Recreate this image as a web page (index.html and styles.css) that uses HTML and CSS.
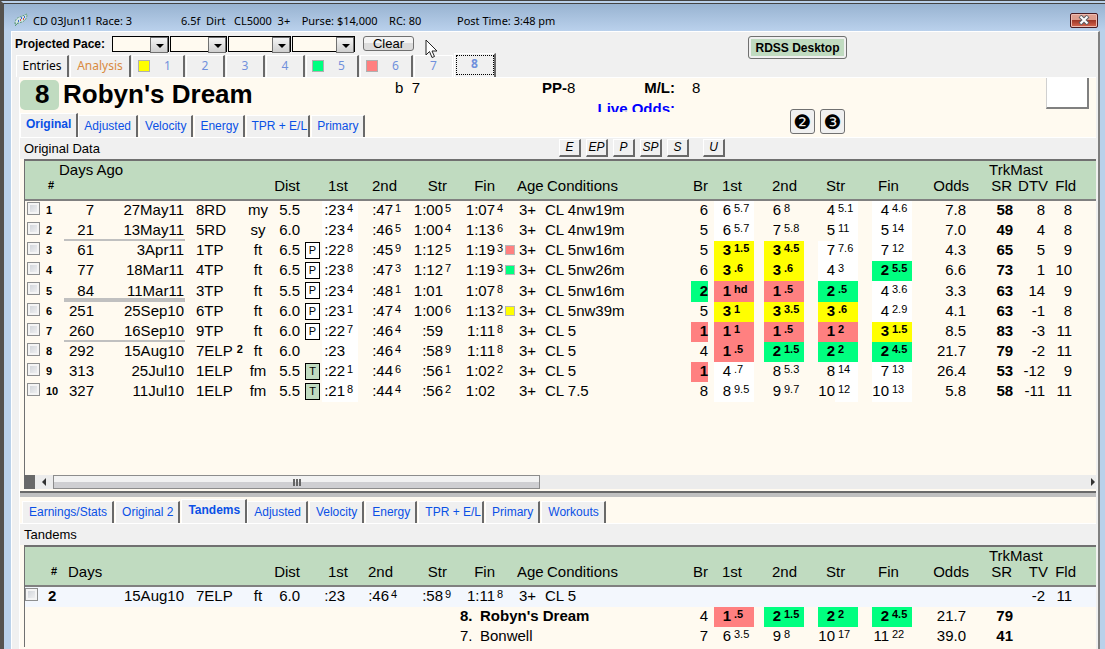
FILE: index.html
```html
<!DOCTYPE html>
<html lang="en">
<head>
  <meta charset="utf-8">
  <title>CD 03Jun11 Race: 3</title>
  <link rel="stylesheet" href="styles.css">
</head>
<body>
<div class="window">
  <header class="titlebar">
    <svg class="app-icon" width="14" height="14" viewBox="0 0 14 14">
      <path d="M1 11 Q1 5 6 4 L13 1 Q13 7 8 9 Z" fill="#d5e6e4" stroke="#5e9a7b" stroke-dasharray="2 1"/>
      <path d="M4 8h1M7 5h1M10 4h1" stroke="#3c62d8" stroke-width="2"/>
      <path d="M6 7h1M9 6h1" stroke="#d85050" stroke-width="2"/>
      <path d="M1 13 L4 10" stroke="#5e9a7b"/>
    </svg>
    <span class="title-race">CD 03Jun11 Race: 3</span>
    <span class="title-info">6.5f&nbsp; Dirt&nbsp;&nbsp; CL5000&nbsp; 3+&nbsp;&nbsp;&nbsp; Purse: $14,000&nbsp;&nbsp;&nbsp; RC: 80</span>
    <span>Post Time: 3:48 pm</span>
    <button class="close" aria-label="Close">
      <svg width="12" height="10" viewBox="0 0 12 10"><path d="M2 1l8 8M10 1l-8 8" stroke="#5b5f66" stroke-width="4"/><path d="M2.5 1.5l7 7M9.5 1.5l-7 7" stroke="#fff" stroke-width="2"/></svg>
    </button>
  </header>

  <main class="client">
    <div class="top">
      <div class="top-left">
        <div class="toolbar">
          <b>Projected Pace:</b>
          <span class="combo"><select aria-label="Pace 1"><option></option></select></span>
          <span class="combo"><select aria-label="Pace 2"><option></option></select></span>
          <span class="combo wide"><select aria-label="Pace 3"><option></option></select></span>
          <span class="combo wide"><select aria-label="Pace 4"><option></option></select></span>
          <button class="clear">Clear</button>
        </div>
        <nav class="tabs race-tabs">
          <button class="tab entries">Entries</button>
          <button class="tab analysis">Analysis</button>
          <button class="tab big"><i class="swatch yellow"></i>1</button>
          <button class="tab">2</button>
          <button class="tab">3</button>
          <button class="tab">4</button>
          <button class="tab big"><i class="swatch green"></i>5</button>
          <button class="tab big"><i class="swatch red"></i>6</button>
          <button class="tab before-active">7</button>
          <button class="tab active">8</button>
        </nav>
      </div>
      <button class="desktop">RDSS Desktop</button>
    </div>

    <div class="page">
      <section class="horse">
        <div class="horse-title">
          <span class="badge">8</span>
          <h1>Robyn's Dream</h1>
        </div>
        <div class="horse-info">
          <span>b&nbsp; 7</span>
          <span><b>PP-</b>8</span>
          <b class="right">M/L:</b>
          <span class="ml">8</span>
          <b class="live">Live Odds:</b>
        </div>
        <div class="silks"></div>
      </section>

      <div class="tab-row">
        <nav class="tabs data-tabs">
          <button class="tab active">Original</button>
          <button class="tab">Adjusted</button>
          <button class="tab">Velocity</button>
          <button class="tab">Energy</button>
          <button class="tab tight">TPR + E/L</button>
          <button class="tab">Primary</button>
        </nav>
        <button class="num">❷</button>
        <button class="num">❸</button>
      </div>

      <div class="strip">
        <span class="strip-label">Original Data</span>
        <button>E</button>
        <button>EP</button>
        <button>P</button>
        <button>SP</button>
        <button>S</button>
        <button class="last">U</button>
      </div>

      <div class="pane upper">
        <table>
          <colgroup>
            <col class="c-check"><col class="c-no"><col class="c-days"><col class="c-date"><col class="c-track"><col class="c-surf"><col class="c-dist"><col class="c-tag">
            <col class="c-t1"><col class="c-t2"><col class="c-t3"><col class="c-t4"><col class="c-mark"><col class="c-age"><col class="c-cond"><col class="c-br">
            <col class="c-k1"><col class="c-k2"><col class="c-k3"><col class="c-k4"><col class="c-odds"><col class="c-sr"><col class="c-dtv"><col class="c-fld"><col>
          </colgroup>
          <thead>
            <tr><th colspan="20" class="days-ago">Days Ago</th><th></th><th colspan="4" class="trk">TrkMast</th></tr>
            <tr class="heads">
              <th></th><th class="hash">#</th><th></th><th></th><th></th><th></th><th class="dist">Dist</th><th></th>
              <th class="time">1st</th><th class="time mid">2nd</th><th class="time mid">Str</th><th class="time">Fin</th><th></th><th class="age">Age</th><th class="cond">Conditions</th><th class="br">Br</th>
              <th class="k1">1st</th><th class="k2">2nd</th><th class="k3">Str</th><th class="k4">Fin</th><th class="odds">Odds</th><th class="sr">SR</th><th class="dtv">DTV</th><th class="fld">Fld</th><th></th>
            </tr>
          </thead>
          <tbody>
            <tr>
              <td class="check"><input type="checkbox" aria-label="Race 1"></td><td class="no">1</td><td class="days">7</td><td class="date">27May11</td><td class="track">8RD</td><td class="surf">my</td><td class="dist">5.5</td><td></td>
              <td class="time white">:23<sup>4</sup></td><td class="time">:47<sup>1</sup></td><td class="time">1:00<sup>5</sup></td><td class="time">1:07<sup>4</sup></td><td></td><td class="age">3+</td><td class="cond">CL 4nw19m</td><td class="br">6</td>
              <td class="k1 white"><span>6</span><sup>5.7</sup></td><td class="k2"><span>6</span><sup>8</sup></td><td class="k3 half"><span>4</span><sup>5.1</sup></td><td class="k4 white"><span>4</span><sup>4.6</sup></td><td class="odds">7.8</td><td class="sr">58</td><td class="dtv">8</td><td class="fld">8</td><td></td>
            </tr>
            <tr class="line">
              <td class="check"><input type="checkbox" aria-label="Race 2"></td><td class="no">2</td><td class="days">21</td><td class="date">13May11</td><td class="track">5RD</td><td class="surf">sy</td><td class="dist">6.0</td><td></td>
              <td class="time white">:23<sup>4</sup></td><td class="time">:46<sup>5</sup></td><td class="time">1:00<sup>4</sup></td><td class="time">1:13<sup>6</sup></td><td></td><td class="age">3+</td><td class="cond">CL 4nw19m</td><td class="br">5</td>
              <td class="k1 white"><span>6</span><sup>5.7</sup></td><td class="k2"><span>7</span><sup>5.8</sup></td><td class="k3 half"><span>5</span><sup>11</sup></td><td class="k4 white"><span>5</span><sup>14</sup></td><td class="odds">7.0</td><td class="sr">49</td><td class="dtv">4</td><td class="fld">8</td><td></td>
            </tr>
            <tr>
              <td class="check"><input type="checkbox" aria-label="Race 3"></td><td class="no">3</td><td class="days">61</td><td class="date">3Apr11</td><td class="track">1TP</td><td class="surf">ft</td><td class="dist">6.5</td><td><span class="tag">P</span></td>
              <td class="time white">:22<sup>8</sup></td><td class="time">:45<sup>9</sup></td><td class="time">1:12<sup>5</sup></td><td class="time">1:19<sup>3</sup></td><td><i class="mark red"></i></td><td class="age">3+</td><td class="cond">CL 5nw16m</td><td class="br">5</td>
              <td class="k1 yellow"><span>3</span><sup>1.5</sup></td><td class="k2 yellow"><span>3</span><sup>4.5</sup></td><td class="k3 white"><span>7</span><sup>7.6</sup></td><td class="k4 white"><span>7</span><sup>12</sup></td><td class="odds">4.3</td><td class="sr">65</td><td class="dtv">5</td><td class="fld">9</td><td></td>
            </tr>
            <tr>
              <td class="check"><input type="checkbox" aria-label="Race 4"></td><td class="no">4</td><td class="days">77</td><td class="date">18Mar11</td><td class="track">4TP</td><td class="surf">ft</td><td class="dist">6.5</td><td><span class="tag">P</span></td>
              <td class="time white">:23<sup>8</sup></td><td class="time">:47<sup>3</sup></td><td class="time">1:12<sup>7</sup></td><td class="time">1:19<sup>3</sup></td><td><i class="mark green"></i></td><td class="age">3+</td><td class="cond">CL 5nw26m</td><td class="br">6</td>
              <td class="k1 yellow"><span>3</span><sup>.6</sup></td><td class="k2 yellow"><span>3</span><sup>.6</sup></td><td class="k3 white"><span>4</span><sup>3</sup></td><td class="k4 green"><span>2</span><sup>5.5</sup></td><td class="odds">6.6</td><td class="sr">73</td><td class="dtv">1</td><td class="fld">10</td><td></td>
            </tr>
            <tr class="line thick">
              <td class="check"><input type="checkbox" aria-label="Race 5"></td><td class="no">5</td><td class="days">84</td><td class="date">11Mar11</td><td class="track">3TP</td><td class="surf">ft</td><td class="dist">5.5</td><td><span class="tag">P</span></td>
              <td class="time white">:23<sup>4</sup></td><td class="time">:48<sup>1</sup></td><td class="time">1:01<sup></sup></td><td class="time">1:07<sup>8</sup></td><td></td><td class="age">3+</td><td class="cond">CL 5nw16m</td><td class="br green">2</td>
              <td class="k1 red"><span>1</span><sup>hd</sup></td><td class="k2 red"><span>1</span><sup>.5</sup></td><td class="k3 green"><span>2</span><sup>.5</sup></td><td class="k4 white"><span>4</span><sup>3.6</sup></td><td class="odds">3.3</td><td class="sr">63</td><td class="dtv">14</td><td class="fld">9</td><td></td>
            </tr>
            <tr>
              <td class="check"><input type="checkbox" aria-label="Race 6"></td><td class="no">6</td><td class="days">251</td><td class="date">25Sep10</td><td class="track">6TP</td><td class="surf">ft</td><td class="dist">6.0</td><td><span class="tag">P</span></td>
              <td class="time white">:23<sup>1</sup></td><td class="time">:47<sup>4</sup></td><td class="time">1:00<sup>6</sup></td><td class="time">1:13<sup>2</sup></td><td><i class="mark yellow"></i></td><td class="age">3+</td><td class="cond">CL 5nw39m</td><td class="br">5</td>
              <td class="k1 yellow"><span>3</span><sup>1</sup></td><td class="k2 yellow"><span>3</span><sup>3.5</sup></td><td class="k3 yellow"><span>3</span><sup>.6</sup></td><td class="k4 white"><span>4</span><sup>2.9</sup></td><td class="odds">4.1</td><td class="sr">63</td><td class="dtv">-1</td><td class="fld">8</td><td></td>
            </tr>
            <tr class="line">
              <td class="check"><input type="checkbox" aria-label="Race 7"></td><td class="no">7</td><td class="days">260</td><td class="date">16Sep10</td><td class="track">9TP</td><td class="surf">ft</td><td class="dist">6.0</td><td><span class="tag">P</span></td>
              <td class="time white">:22<sup>7</sup></td><td class="time">:46<sup>4</sup></td><td class="time">:59<sup></sup></td><td class="time">1:11<sup>8</sup></td><td></td><td class="age">3+</td><td class="cond">CL 5</td><td class="br red">1</td>
              <td class="k1 red"><span>1</span><sup>1</sup></td><td class="k2 red"><span>1</span><sup>.5</sup></td><td class="k3 red"><span>1</span><sup>2</sup></td><td class="k4 yellow"><span>3</span><sup>1.5</sup></td><td class="odds">8.5</td><td class="sr">83</td><td class="dtv">-3</td><td class="fld">11</td><td></td>
            </tr>
            <tr>
              <td class="check"><input type="checkbox" aria-label="Race 8"></td><td class="no">8</td><td class="days">292</td><td class="date">15Aug10</td><td class="track">7ELP<sup>2</sup></td><td class="surf">ft</td><td class="dist">6.0</td><td></td>
              <td class="time white">:23<sup></sup></td><td class="time">:46<sup>4</sup></td><td class="time">:58<sup>9</sup></td><td class="time">1:11<sup>8</sup></td><td></td><td class="age">3+</td><td class="cond">CL 5</td><td class="br">4</td>
              <td class="k1 red"><span>1</span><sup>.5</sup></td><td class="k2 green"><span>2</span><sup>1.5</sup></td><td class="k3 green"><span>2</span><sup>2</sup></td><td class="k4 green"><span>2</span><sup>4.5</sup></td><td class="odds">21.7</td><td class="sr">79</td><td class="dtv">-2</td><td class="fld">11</td><td></td>
            </tr>
            <tr>
              <td class="check"><input type="checkbox" aria-label="Race 9"></td><td class="no">9</td><td class="days">313</td><td class="date">25Jul10</td><td class="track">1ELP</td><td class="surf">fm</td><td class="dist">5.5</td><td><span class="tag turf">T</span></td>
              <td class="time white">:22<sup>1</sup></td><td class="time">:44<sup>6</sup></td><td class="time">:56<sup>1</sup></td><td class="time">1:02<sup>2</sup></td><td></td><td class="age">3+</td><td class="cond">CL 5</td><td class="br red">1</td>
              <td class="k1 white"><span>4</span><sup>.7</sup></td><td class="k2"><span>8</span><sup>5.3</sup></td><td class="k3 half"><span>8</span><sup>14</sup></td><td class="k4 white"><span>7</span><sup>13</sup></td><td class="odds">26.4</td><td class="sr">53</td><td class="dtv">-12</td><td class="fld">9</td><td></td>
            </tr>
            <tr>
              <td class="check"><input type="checkbox" aria-label="Race 10"></td><td class="no">10</td><td class="days">327</td><td class="date">11Jul10</td><td class="track">1ELP</td><td class="surf">fm</td><td class="dist">5.5</td><td><span class="tag turf">T</span></td>
              <td class="time white">:21<sup>8</sup></td><td class="time">:44<sup>4</sup></td><td class="time">:56<sup>2</sup></td><td class="time">1:02<sup></sup></td><td></td><td class="age">3+</td><td class="cond">CL 7.5</td><td class="br">8</td>
              <td class="k1 white"><span>8</span><sup>9.5</sup></td><td class="k2"><span>9</span><sup>9.7</sup></td><td class="k3 half"><span>10</span><sup>12</sup></td><td class="k4 white"><span>10</span><sup>13</sup></td><td class="odds">5.8</td><td class="sr">58</td><td class="dtv">-11</td><td class="fld">11</td><td></td>
            </tr>
          </tbody>
        </table>
      </div>

      <div class="scrollbar">
        <span class="corner"></span>
        <span class="arrow left"></span>
        <div class="track-bar"><div class="thumb"><i></i><i></i><i></i></div></div>
        <span class="arrow"></span>
      </div>
      <div class="splitter"></div>

      <nav class="tabs data-tabs lower-tabs">
        <button class="tab">Earnings/Stats</button>
        <button class="tab">Original 2</button>
        <button class="tab active">Tandems</button>
        <button class="tab">Adjusted</button>
        <button class="tab">Velocity</button>
        <button class="tab">Energy</button>
        <button class="tab tight">TPR + E/L</button>
        <button class="tab">Primary</button>
        <button class="tab">Workouts</button>
      </nav>
      <div class="strip"><span class="strip-label">Tandems</span></div>

      <div class="pane">
        <table class="tandem">
          <colgroup>
            <col class="c-check"><col class="c-no"><col class="c-days"><col class="c-date"><col class="c-track"><col class="c-surf"><col class="c-dist"><col class="c-tag">
            <col class="c-t1"><col class="c-t2"><col class="c-t3"><col class="c-t4"><col class="c-mark"><col class="c-age"><col class="c-cond"><col class="c-br">
            <col class="c-k1"><col class="c-k2"><col class="c-k3"><col class="c-k4"><col class="c-odds"><col class="c-sr"><col class="c-dtv"><col class="c-fld"><col>
          </colgroup>
          <thead>
            <tr><th colspan="21"></th><th colspan="4" class="trk">TrkMast</th></tr>
            <tr class="heads">
              <th></th><th class="hash">#</th><th colspan="2" class="days-head">Days</th><th></th><th></th><th class="dist">Dist</th><th></th>
              <th class="time">1st</th><th class="time mid">2nd</th><th class="time mid">Str</th><th class="time">Fin</th><th></th><th class="age">Age</th><th class="cond">Conditions</th><th class="br">Br</th>
              <th class="k1">1st</th><th class="k2">2nd</th><th class="k3">Str</th><th class="k4">Fin</th><th class="odds">Odds</th><th class="sr">SR</th><th class="dtv">TV</th><th class="fld">Fld</th><th></th>
            </tr>
          </thead>
          <tbody>
            <tr class="race">
              <td class="check"><input type="checkbox" aria-label="Tandem 2"></td><td class="no">2</td><td></td><td class="date">15Aug10</td><td class="track">7ELP</td><td class="surf">ft</td><td class="dist">6.0</td><td></td>
              <td class="time">:23<sup></sup></td><td class="time">:46<sup>4</sup></td><td class="time">:58<sup>9</sup></td><td class="time">1:11<sup>8</sup></td><td></td><td class="age">3+</td><td class="cond">CL 5</td><td></td>
              <td></td><td></td><td></td><td></td><td></td><td></td><td class="dtv">-2</td><td class="fld">11</td><td></td>
            </tr>
            <tr>
              <td colspan="11"></td><td colspan="4" class="runner"><b><span>8.</span>Robyn's Dream</b></td><td class="br">4</td>
              <td class="k1 red"><span>1</span><sup>.5</sup></td><td class="k2 green"><span>2</span><sup>1.5</sup></td><td class="k3 green"><span>2</span><sup>2</sup></td><td class="k4 green"><span>2</span><sup>4.5</sup></td><td class="odds">21.7</td><td class="sr">79</td><td></td><td></td><td></td>
            </tr>
            <tr>
              <td colspan="11"></td><td colspan="4" class="runner"><span>7.</span>Bonwell</td><td class="br">7</td>
              <td class="k1"><span>6</span><sup>3.5</sup></td><td class="k2"><span>9</span><sup>8</sup></td><td class="k3"><span>10</span><sup>17</sup></td><td class="k4"><span>11</span><sup>22</sup></td><td class="odds">39.0</td><td class="sr">41</td><td></td><td></td><td></td>
            </tr>
          </tbody>
        </table>
      </div>
    </div>
  </main>

  <svg class="cursor" width="13" height="20" viewBox="0 0 13 20"><path d="M1 1v15l3.500-3.500 2.500 6 2.500-1-2.500-5.500h5z" fill="#fff" stroke="#222"/></svg>
</div>
</body>
</html>
```
FILE: styles.css
```css
* {
  box-sizing: border-box;
}

body {
  margin: 0;
  font-family: "Liberation Sans", Arial, sans-serif;
  font-size: 15px;
  color: #000;
  background: #bad1ea;
}

button {
  font-family: inherit;
  color: inherit;
  padding: 0;
}

.window {
  position: relative;
  display: flex;
  flex-direction: column;
  height: 100vh;
  overflow: hidden;
  border-top: 4px double #444;
  border-left: 4px solid #55524e;
  background: #bad1ea;
}

/* title bar */
.titlebar {
  display: flex;
  align-items: center;
  height: 27px;
  flex: none;
  padding: 5px 7px 0 10px;
  background: linear-gradient(#98b3d1, #bad1ec);
  font-family: "Noto Sans", "Open Sans", sans-serif;
  font-size: 11px;
  white-space: pre;
}

.app-icon {
  margin-right: 5px;
}

.title-race {
  width: 148px;
}

.title-info {
  width: 276px;
}

.close {
  display: flex;
  align-items: center;
  justify-content: center;
  width: 28px;
  height: 15px;
  margin-left: auto;
  border: 1px solid #4a1c22;
  border-radius: 2px;
  background: linear-gradient(#e0a090 0, #dc9c8c 50%, #a03828 50%, #d86850 100%);
  box-shadow: inset 0 0 0 1px #eebbb0;
}

.client {
  display: flex;
  flex-direction: column;
  flex: 1;
  min-height: 0;
  margin: 0 5px 0 7px;
  border: 1px solid #fff;
  border-right: 2px solid #808080;
  border-bottom: 0;
  background: #f0f0f0;
}

/* toolbar and race tabs */
.top {
  display: flex;
  align-items: flex-start;
  height: 45px;
  flex: none;
}

.top-left {
  width: 736px;
}

.toolbar {
  display: flex;
  align-items: center;
  gap: 1px;
  height: 21px;
  padding: 2px 0 0 3px;
  font-size: 12px;
}

.toolbar b {
  width: 96px;
}

.combo {
  position: relative;
  width: 57px;
  height: 16px;
}

.combo.wide {
  width: 63px;
}

.combo select {
  display: block;
  width: 100%;
  height: 100%;
  appearance: none;
  border: 1px solid #000;
  border-radius: 0;
  background: #fffaf0;
}

.combo::before {
  content: "";
  position: absolute;
  top: 1px;
  right: 1px;
  width: 16px;
  height: 14px;
  border: 1px solid #707070;
  background: linear-gradient(#f4f4f4, #cfcfcf);
  pointer-events: none;
}

.combo::after {
  content: "";
  position: absolute;
  top: 8px;
  right: 5px;
  border: 4px solid transparent;
  border-top-color: #000;
  border-bottom: 0;
  pointer-events: none;
}

.clear {
  width: 51px;
  height: 15px;
  margin-left: 7px;
  border: 1px solid #707070;
  border-radius: 3px;
  background: linear-gradient(#f4f4f4 50%, #dcdcdc 50%);
  font-size: 13px;
  line-height: 13px;
}

.desktop {
  width: 99px;
  height: 23px;
  margin-top: 4px;
  border: 1px solid #707070;
  border-radius: 3px;
  background: #c0dbc0;
  box-shadow: inset 0 0 0 2px #f0f0f0;
  font-size: 12px;
  font-weight: bold;
}

.tabs {
  display: flex;
  align-items: flex-end;
  height: 24px;
}

.tab {
  height: 22px;
  padding: 0 7px;
  border: 1px solid #fff;
  border-right: 2px solid #696969;
  border-bottom: 0;
  margin-right: 1px;
  background: #f0f0f0;
  color: #0a50e6;
  font-size: 12px;
  white-space: nowrap;
}

.tab.active {
  height: 24px;
  font-weight: bold;
}

.race-tabs {
  padding-left: 4px;
}

.race-tabs .tab {
  display: flex;
  align-items: center;
  justify-content: center;
  width: 39px;
  padding: 0 0 2px;
  color: #7090dc;
  font-family: "Noto Sans", "Open Sans", sans-serif;
}

.race-tabs .entries {
  width: 53px;
  color: #000;
}

.race-tabs .analysis {
  width: 61px;
  color: #d98a40;
}

.race-tabs .big {
  width: 53px;
  justify-content: flex-start;
  padding-left: 5px;
}

.race-tabs .before-active {
  border-right: 1px solid #fff;
}

.race-tabs .active {
  width: 42px;
  padding-bottom: 4px;
  outline: 1px dotted #000;
  outline-offset: -3px;
}

.swatch {
  width: 12px;
  height: 12px;
  margin-right: 14px;
  border: 1px solid #b0b0b0;
}

.yellow {
  background-color: #ff0;
}

.green {
  background-color: #00ff80;
}

.red {
  background-color: #ff8080;
}

.white {
  background-color: #fff;
}

/* horse header */
.page {
  display: flex;
  flex-direction: column;
  flex: 1;
  min-height: 0;
  margin: 0 2px 0 7px;
  padding-bottom: 2px;
  border-top: 1px solid #fff;
  border-left: 1px solid #fff;
  background: #fffaf0;
}

.horse {
  display: flex;
  height: 34px;
  flex: none;
  overflow: hidden;
}

.horse-title {
  display: flex;
  align-items: flex-start;
  gap: 4px;
  width: 375px;
  padding-top: 2px;
}

.badge {
  width: 39px;
  height: 30px;
  padding-left: 15px;
  border-radius: 5px;
  background: #c0dbc0;
  font-size: 26px;
  font-weight: bold;
  line-height: 28px;
}

.horse h1 {
  margin: 0;
  font-size: 26px;
  line-height: 28px;
}

.horse-info {
  display: grid;
  grid-template-columns: 147px 50px 83px 40px;
  grid-template-rows: 21px 21px;
  line-height: 20px;
}

.horse-info .right {
  text-align: right;
}

.ml {
  padding-left: 17px;
}

.live {
  grid-column: 3;
  color: #00f;
  text-align: right;
}

.silks {
  width: 43px;
  height: 31px;
  margin: 0 7px 0 auto;
  background: #fff;
  border-left: 1px solid #d0d0d0;
  border-right: 2px solid #808080;
  border-bottom: 2px solid #808080;
}

.tab-row {
  display: flex;
  gap: 5px;
  flex: none;
  margin-top: 1px;
}

.data-tabs .tab {
  padding: 0 5px 2px;
}

.data-tabs .tight {
  padding: 0 1px 2px 4px;
}

.tab-row .tabs {
  width: 765px;
}

.data-tabs .active {
  padding: 0 5px 4px;
  margin-right: 0;
}

.lower-tabs .tab {
  padding-left: 6px;
}

.num {
  width: 25px;
  height: 25px;
  margin-top: -4px;
  border: 1px solid #707070;
  border-radius: 3px;
  background: #f0f0f0;
  font-family: "DejaVu Sans", sans-serif;
  font-size: 20px;
  line-height: 22px;
}

.strip {
  display: flex;
  align-items: center;
  gap: 5px;
  height: 22px;
  flex: none;
  padding-left: 4px;
  border-top: 1px solid #fff;
  background: #f0f0f0;
  font-size: 13px;
}

.strip-label {
  width: 530px;
}

.strip button {
  width: 22px;
  height: 18px;
  margin-top: -2px;
  border: 1px solid #fff;
  border-right: 2px solid #696969;
  border-bottom: 2px solid #696969;
  background: #f0f0f0;
  font-size: 12px;
  font-style: italic;
  line-height: 15px;
}

.strip .last {
  margin-left: 9px;
}

/* race tables */
.pane {
  flex: none;
  margin-left: 4px;
  border-top: 2px solid #707070;
  border-left: 1px solid #707070;
}

.pane.upper {
  flex: 1;
  min-height: 0;
  overflow: hidden;
}

table {
  width: 100%;
  table-layout: fixed;
  border-collapse: separate;
  border-spacing: 0;
}

.c-check { width: 18px; }
.c-no { width: 21px; }
.c-days { width: 31px; }
.c-date { width: 90px; }
.c-track { width: 59px; }
.c-surf { width: 28px; }
.c-dist { width: 30px; }
.c-tag { width: 20px; }
.c-t1 { width: 36px; }
.c-t2 { width: 45px; }
.c-t3 { width: 50px; }
.c-t4 { width: 52px; }
.c-mark { width: 11px; }
.c-age { width: 27px; }
.c-cond { width: 148px; }
.c-br { width: 17px; }
.c-k1 { width: 46px; }
.c-k2 { width: 50px; }
.c-k3 { width: 54px; }
.c-k4 { width: 54px; }
.c-odds { width: 60px; }
.c-sr { width: 42px; }
.c-dtv { width: 37px; }
.c-fld { width: 27px; }

.tandem .c-t2 { width: 41px; }
.tandem .c-t3 { width: 54px; }

th {
  height: 17px;
  padding: 0;
  background: #c0dbc0;
  font-weight: normal;
  line-height: 17px;
  text-align: left;
  white-space: nowrap;
}

.heads th {
  height: 23px;
  padding-bottom: 6px;
  border-bottom: 2px solid #808080;
  line-height: 15px;
}

td {
  height: 20px;
  padding: 0 0 2px;
  line-height: 18px;
  white-space: nowrap;
}

.days-ago {
  padding-left: 34px;
}

.days-head {
  padding-left: 4px;
}

.trk {
  padding-left: 17px;
}

.hash {
  padding-left: 5px;
  font-size: 11px;
  font-weight: bold;
}

.tandem .hash {
  padding-left: 8px;
}

.days,
.date,
.dist,
.time,
.br,
.odds,
.sr,
.dtv,
.fld {
  text-align: right;
}

td.days,
td.date {
  padding-right: 1px;
}

.check {
  padding-left: 2px;
  vertical-align: top;
}

.tandem .check {
  padding-left: 0;
}

.check input {
  display: block;
  appearance: none;
  width: 13px;
  height: 13px;
  margin: 1px 0 0;
  border: 1px solid #8e8f8f;
  background: linear-gradient(135deg, #cbcfd5, #f6f6f6);
  box-shadow: inset 0 0 0 2px #f4f4f4;
}

.no {
  padding-left: 3px;
  font-size: 11px;
  font-weight: bold;
}

.tandem .no {
  padding-left: 5px;
  font-size: 15px;
}

.line .days,
.line .date {
  box-shadow: inset 0 -2px #c0c0c0;
}

.thick td {
  height: 21px;
}

.thick .days,
.thick .date {
  box-shadow: inset 0 -4px #c0c0c0;
}

.track {
  padding-left: 11px;
}

.surf {
  text-align: center;
}

.dist {
  padding-right: 2px;
}

.tag {
  display: block;
  width: 15px;
  height: 17px;
  margin-left: 3px;
  border: 1px solid #000;
  background: #fff;
  font-size: 11px;
  line-height: 15px;
  text-align: center;
}

.tag.turf {
  background: #c0dbc0;
}

sup {
  font-size: 11px;
  line-height: 0;
  vertical-align: 3px;
}

.track sup {
  margin-left: 4px;
  font-weight: bold;
}

.time sup {
  display: inline-block;
  width: 8px;
  margin-left: 2px;
  text-align: left;
}

td.time.white {
  padding-right: 3px;
}

.tandem td.time:nth-child(9) {
  padding-right: 3px;
}

th.time {
  padding-right: 10px;
}

th.mid {
  padding-right: 6px;
}

.mark {
  display: block;
  width: 10px;
  height: 10px;
  border: 1px solid #b8b8b8;
}

th.age {
  padding-left: 1px;
}

td.age {
  padding-left: 3px;
}

th.cond {
  padding-left: 4px;
}

td.cond {
  padding-left: 2px;
}

/* colour fills the call, not the gap before it */
td.k1,
td.k2,
td.k3,
td.k4 {
  padding-bottom: 0;
  background-clip: content-box;
}

td.k1 { padding-left: 6px; }
td.k2 { padding-left: 10px; }
td.k3 { padding-left: 14px; }
td.k4 { padding-left: 14px; }
th.k1 { padding-left: 14px; }
th.k2 { padding-left: 18px; }
th.k3 { padding-left: 22px; }
th.k4 { padding-left: 20px; }

td.k1 span,
td.k2 span,
td.k3 span,
td.k4 span {
  display: inline-block;
  width: 17px;
  margin-right: 3px;
  padding-bottom: 2px;
  text-align: right;
}

td.half {
  background: linear-gradient(to right, transparent 17px, #fff 17px) content-box;
}

td.yellow,
td.green,
td.red,
td.sr {
  font-weight: bold;
}

td.odds { padding-right: 6px; }
th.odds { padding-right: 3px; }
td.sr { padding-right: 1px; }
th.sr { padding-right: 2px; }
td.dtv { padding-right: 6px; }
th.dtv { padding-right: 3px; }
td.fld { padding-right: 6px; }
th.fld { padding-right: 2px; }

.race td {
  background: #f3f7fd;
}

.runner {
  padding-left: 7px;
}

.runner span {
  display: inline-block;
  width: 20px;
}

/* scrollbar and splitter */
.scrollbar {
  display: flex;
  align-items: center;
  height: 14px;
  flex: none;
  margin-left: 4px;
  background: #ececec;
}

.corner {
  width: 11px;
  height: 14px;
  background: #696969;
}

.arrow {
  margin: 0 1px;
  border: 4px solid transparent;
  border-left-color: #333;
  border-right: 0;
}

.arrow.left {
  margin: 0 7px;
  border: 4px solid transparent;
  border-right-color: #333;
  border-left: 0;
}

.track-bar {
  flex: 1;
}

.thumb {
  display: flex;
  align-items: center;
  justify-content: center;
  gap: 1px;
  width: 47%;
  height: 14px;
  border: 1px solid #8c8c8c;
  background: linear-gradient(#f2f2f2 50%, #cfcfd2 50%);
}

.thumb i {
  width: 2px;
  height: 7px;
  background: #666;
}

.splitter {
  height: 6px;
  flex: none;
  margin: 2px 0 2px;
  border-top: 2px solid #696969;
  background: #c0c0c0;
}

.lower-tabs {
  flex: none;
  padding-left: 2px;
}

.cursor {
  position: absolute;
  top: 35px;
  left: 421px;
}
```
